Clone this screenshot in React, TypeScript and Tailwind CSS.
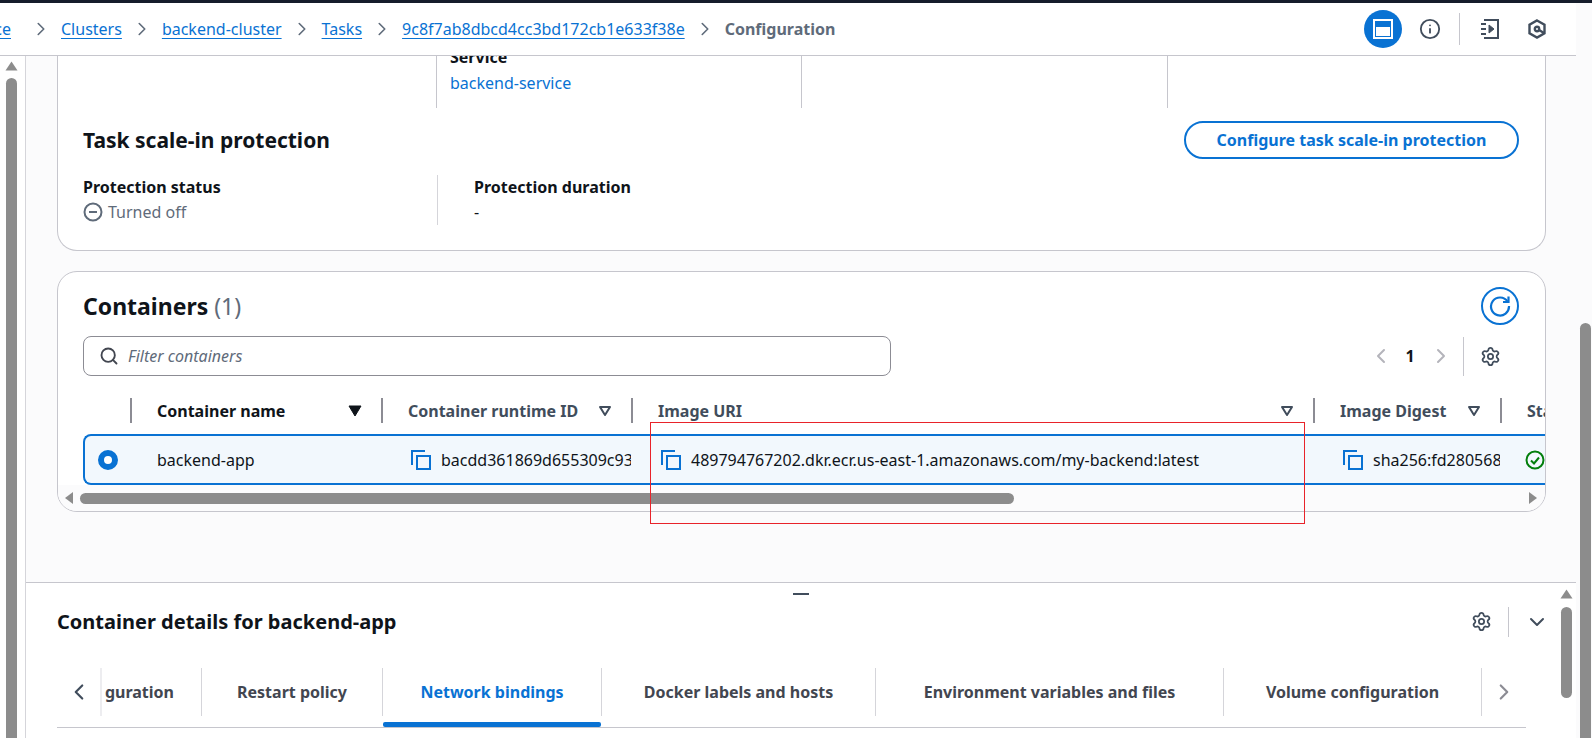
import React from 'react';
import { ChevronLeft, ChevronRight, ChevronDown, Info, Settings, Search } from 'lucide-react';

const font = "font-['Noto_Sans','Liberation_Sans',sans-serif]";

function CopyIcon() {
    return (
        <svg width="20" height="20" viewBox="0 0 20 20" fill="none" stroke="#0972d3" strokeWidth="2" className="flex-none">
            <path d="M1 15V1h13" />
            <rect x="6" y="6" width="13" height="13" />
        </svg>
    );
}

function SortIcon({ filled }: { filled?: boolean }) {
    return (
        <svg width="14" height="12" viewBox="0 0 14 12" className="flex-none">
            {filled ? (
                <path d="M1 1h12L7 11z" fill="#0f141a" stroke="#0f141a" strokeWidth="1" strokeLinejoin="round" />
            ) : (
                <path d="M2 2h10L7 10z" fill="none" stroke="#414d5c" strokeWidth="2" strokeLinejoin="round" />
            )}
        </svg>
    );
}

function UpArrow() {
    return (
        <svg width="13" height="10" viewBox="0 0 13 10" className="flex-none">
            <path d="M6.5 0.5 12.5 9.5H0.5z" fill="#8c8c8c" />
        </svg>
    );
}

function Crumb({ label }: { label: string }) {
    return <a className="text-[#0972d3] underline underline-offset-[3px] decoration-1 whitespace-nowrap">{label}</a>;
}

function CrumbSep() {
    return <ChevronRight size={22} strokeWidth={1.75} className="text-[#5f6b7a] flex-none" />;
}

function HeaderIcons() {
    return (
        <div className="flex items-center ml-auto text-[#414d5c]">
            <div className="w-[38px] h-[38px] rounded-full bg-[#0972d3] flex items-center justify-center">
                <svg width="20" height="20" viewBox="0 0 20 20" fill="none">
                    <rect x="1" y="1" width="18" height="18" stroke="#fff" strokeWidth="2" />
                    <rect x="3" y="8" width="14" height="9" fill="#fff" />
                </svg>
            </div>
            <Info size={22} strokeWidth={2} className="ml-[17px]" />
            <div className="w-px h-[32px] bg-[#c6c6cd] ml-[18px]" />
            <svg width="20" height="20" viewBox="0 0 20 20" fill="none" stroke="currentColor" strokeWidth="2" className="ml-[20px]">
                <path d="M4 1h14v18H4" />
                <path d="M1 5h5M1 10h5M1 15h5" />
                <path d="M9 6l5 4-5 4z" fill="currentColor" strokeWidth="1" />
            </svg>
            <svg width="20" height="20" viewBox="0 0 20 20" fill="none" stroke="currentColor" strokeWidth="2.4" className="ml-[27px] mr-[29px]">
                <path d="M10 1.5l7.5 4.2v8.6L10 18.5l-7.5-4.2V5.700z" />
                <circle cx="10" cy="10" r="2.200" />
                <path d="M12 11l5 3" />
            </svg>
        </div>
    );
}

function TableHead({ width, label, sort, active }: { width: string; label: string; sort?: boolean; active?: boolean }) {
    return (
        <div className={`${width} flex-none flex items-center h-[25px] border-l-2 border-[#8c8c94] pl-[25px] pr-[19px]`}>
            <span className={`font-bold whitespace-nowrap ${active ? 'text-[#0f141a]' : 'text-[#414d5c]'}`}>{label}</span>
            {sort && <span className="ml-auto"><SortIcon filled={active} /></span>}
        </div>
    );
}

function CopyCell({ width, value }: { width: string; value: string }) {
    return (
        <div className={`${width} flex-none flex items-center gap-[10px] pl-[30px] overflow-hidden whitespace-nowrap text-[#0f141a]`}>
            <CopyIcon />
            <span>{value}</span>
        </div>
    );
}

function Tab({ label, active, width }: { label: string; active?: boolean; width: string }) {
    return (
        <div className={`${width} flex-none h-full relative flex items-center justify-center border-r border-[#d5d5da] font-bold whitespace-nowrap ${active ? 'text-[#0972d3]' : 'text-[#424650]'}`}>
            {label}
            {active && <div className="absolute left-0 right-0 -bottom-[11px] h-[5px] bg-[#0972d3] rounded-[2px]" />}
        </div>
    );
}

export default function App() {
    return (
        <div className={`${font} w-[1592px] h-[738px] overflow-hidden flex flex-col bg-[#fbfbfc] text-[16px] text-[#0f141a] relative`}>
            <div className="h-[3px] flex-none bg-[#161d2b]" />
            <div className="flex flex-1 min-h-0">
                <div className="w-[1576px] flex-none flex flex-col">
                    <div className="h-[53px] flex-none bg-white border-b border-[#c6c6cd] flex items-center gap-[9px] text-[16px]">
                        <div className="w-[11px] overflow-hidden flex justify-end"><Crumb label="ce" /></div>
                        <span className="w-[1px]" />
                        <CrumbSep />
                        <Crumb label="Clusters" />
                        <CrumbSep />
                        <Crumb label="backend-cluster" />
                        <CrumbSep />
                        <Crumb label="Tasks" />
                        <CrumbSep />
                        <Crumb label="9c8f7ab8dbcd4cc3bd172cb1e633f38e" />
                        <CrumbSep />
                        <span className="font-bold text-[#5f6b7a] whitespace-nowrap">Configuration</span>
                        <HeaderIcons />
                    </div>

                    <div className="flex flex-1 min-h-0">
                        <div className="w-[26px] flex-none bg-white border-r border-[#d5d5da] flex flex-col items-center pr-[2px] pt-[5px]">
                            <UpArrow />
                            <div className="w-[11px] flex-1 mt-[7px] bg-[#8c8c8c] rounded-t-full" />
                        </div>

                        <div className="flex-1 min-w-0 flex flex-col">
                            <div className="h-[526px] flex-none bg-[#fbfbfc] pl-[31px] pr-[30px]">
                                <div className="h-[195px] bg-white border border-t-0 border-[#c6c6cd] rounded-b-[20px] overflow-hidden">
                                    <div className="flex h-[52px]">
                                        <div className="w-[378px] flex-none" />
                                        <div className="w-[365px] flex-none border-l border-[#c6c6cd] pl-[13px]">
                                            <div className="font-bold leading-[20px] -mt-[9px]">Service</div>
                                            <div className="text-[#0972d3] leading-[26px] mt-[3px]">backend-service</div>
                                        </div>
                                        <div className="w-[366px] flex-none border-l border-[#c6c6cd]" />
                                        <div className="flex-1 border-l border-[#c6c6cd]" />
                                    </div>
                                    <div className="flex items-center justify-between pl-[25px] pr-[26px] mt-[13px]">
                                        <h2 className="text-[21px] font-bold leading-[38px]">Task scale-in protection</h2>
                                        <button className="h-[38px] w-[335px] rounded-full border-2 border-[#0972d3] text-[#0972d3] font-bold">Configure task scale-in protection</button>
                                    </div>
                                    <div className="flex pl-[25px] mt-[16px]">
                                        <div className="w-[354px] flex-none h-[50px]">
                                            <div className="font-bold leading-[24px]">Protection status</div>
                                            <div className="flex items-center gap-[5px] text-[#5f6b7a] leading-[26px]">
                                                <svg width="20" height="20" viewBox="0 0 20 20" fill="none" stroke="#5f6b7a" strokeWidth="2">
                                                    <circle cx="10" cy="10" r="8.500" />
                                                    <path d="M6 10h8" />
                                                </svg>
                                                Turned off
                                            </div>
                                        </div>
                                        <div className="border-l border-[#d5d5da] pl-[36px] h-[50px]">
                                            <div className="font-bold leading-[24px]">Protection duration</div>
                                            <div className="leading-[26px]">-</div>
                                        </div>
                                    </div>
                                </div>

                                <div className="mt-[20px] h-[241px] bg-white border border-[#c6c6cd] rounded-[20px] overflow-hidden flex flex-col">
                                    <div className="flex items-center justify-between pl-[25px] pr-[26px] pt-[15px]">
                                        <h2 className="text-[23px] font-bold leading-[38px]">
                                            Containers <span className="font-normal text-[#5f6b7a]">(1)</span>
                                        </h2>
                                        <div className="w-[38px] h-[38px] rounded-full border-2 border-[#0972d3] flex items-center justify-center">
                                            <svg width="22" height="22" viewBox="0 0 22 22" fill="none" stroke="#0972d3" strokeWidth="2.200">
                                                <path d="M18.500 6.500A9 9 0 1 0 20 11" />
                                                <path d="M19.500 1.500v5.500h-5.500" />
                                            </svg>
                                        </div>
                                    </div>
                                    <div className="flex items-center pl-[25px] mt-[11px]">
                                        <div className="w-[808px] h-[40px] rounded-[8px] border border-[#8c8c94] flex items-center pl-[15px] gap-[9px] text-[#5f6b7a] italic">
                                            <Search size={20} strokeWidth={2.250} className="text-[#424650]" />
                                            Filter containers
                                        </div>
                                        <ChevronLeft size={24} strokeWidth={2} className="text-[#b4b4bb] ml-[478px]" />
                                        <span className="font-bold ml-[11px] w-[12px] text-center">1</span>
                                        <ChevronRight size={24} strokeWidth={2} className="text-[#b4b4bb] ml-[13px]" />
                                        <div className="w-px h-[39px] bg-[#c6c6cd] ml-[10px]" />
                                        <Settings size={21} strokeWidth={2} className="text-[#414d5c] ml-[16px]" />
                                    </div>
                                    <div className="mt-[22px] pl-[25px] overflow-hidden flex-none">
                                        <div className="w-[1600px]">
                                            <div className="flex h-[37px]">
                                                <div className="w-[47px] flex-none" />
                                                <TableHead width="w-[251px]" label="Container name" sort active />
                                                <TableHead width="w-[250px]" label="Container runtime ID" sort />
                                                <TableHead width="w-[682px]" label="Image URI" sort />
                                                <TableHead width="w-[187px]" label="Image Digest" sort />
                                                <TableHead width="w-[183px]" label="Status" />
                                            </div>
                                            <div className="flex items-center h-[51px] border-2 border-r-0 border-[#0972d3] rounded-l-[8px] bg-[#f2f8fd] -mt-[1px]">
                                                <div className="w-[45px] flex-none flex justify-center pl-[1px]">
                                                    <div className="w-[20px] h-[20px] rounded-full border-[6px] border-[#0972d3] bg-white" />
                                                </div>
                                                <div className="w-[251px] flex-none pl-[27px]">backend-app</div>
                                                <CopyCell width="w-[250px]" value="bacdd361869d655309c93a7e" />
                                                <CopyCell width="w-[682px]" value="489794767202.dkr.ecr.us-east-1.amazonaws.com/my-backend:latest" />
                                                <CopyCell width="w-[187px]" value="sha256:fd2805684cbe9a1" />
                                                <div className="pl-[25px]">
                                                    <svg width="20" height="20" viewBox="0 0 20 20" fill="none" stroke="#037f0c" strokeWidth="2">
                                                        <circle cx="10" cy="10" r="8.500" />
                                                        <path d="M6 10.500l3 3 5-6" />
                                                    </svg>
                                                </div>
                                            </div>
                                        </div>
                                    </div>
                                    <div className="flex-1 flex items-center pl-[7px] pr-[8px] bg-[#fbfbfc]">
                                        <svg width="8" height="12" viewBox="0 0 8 12"><path d="M8 0v12L0 6z" fill="#8c8c8c" /></svg>
                                        <div className="w-[934px] h-[11px] bg-[#8c8c8c] rounded-full ml-[7px]" />
                                        <svg width="8" height="12" viewBox="0 0 8 12" className="ml-auto"><path d="M0 0v12l8-6z" fill="#8c8c8c" /></svg>
                                    </div>
                                </div>
                            </div>

                            <div className="flex-1 min-h-0 flex bg-white border-t border-[#c6c6cd]">
                                <div className="w-[1534px] flex-none flex flex-col pl-[31px] relative">
                                    <div className="absolute left-[767px] top-[10px] w-[16px] h-[2px] bg-[#414d5c]" />
                                    <div className="flex items-center pt-[20px] pr-[7px] h-[57px]">
                                        <h2 className="text-[20px] font-bold">Container details for backend-app</h2>
                                        <Settings size={21} strokeWidth={2} className="text-[#414d5c] ml-auto" />
                                        <div className="w-px h-[30px] bg-[#c6c6cd] ml-[16px]" />
                                        <ChevronDown size={24} strokeWidth={2} className="text-[#414d5c] ml-[16px] mr-[4px]" />
                                    </div>
                                    <div className="mt-[28px] h-[60px] w-[1469px] flex-none border-b border-[#c6c6cd] pb-[11px]">
                                        <div className="flex items-center h-[48px] w-full">
                                            <div className="w-[45px] flex-none flex items-center pl-[9px] h-full border-r-2 border-[#ededf0] text-[#414d5c]">
                                                <ChevronLeft size={26} strokeWidth={2} />
                                            </div>
                                            <div className="w-[100px] flex-none h-full border-r border-[#d5d5da] flex items-center justify-end pr-[27px] font-bold text-[#424650] overflow-hidden whitespace-nowrap">guration</div>
                                            <Tab width="w-[181px]" label="Restart policy" />
                                            <Tab width="w-[219px]" label="Network bindings" active />
                                            <Tab width="w-[274px]" label="Docker labels and hosts" />
                                            <Tab width="w-[348px]" label="Environment variables and files" />
                                            <Tab width="w-[258px]" label="Volume configuration" />
                                            <div className="flex-1 flex items-center justify-center text-[#8c8c94]">
                                                <ChevronRight size={26} strokeWidth={2} />
                                            </div>
                                        </div>
                                    </div>
                                </div>
                                <div className="flex-1 flex flex-col items-center pt-[6px] pr-[3px]">
                                    <UpArrow />
                                    <div className="w-[11px] h-[91px] mt-[8px] bg-[#8c8c8c] rounded-full" />
                                </div>
                            </div>
                        </div>
                    </div>
                </div>

                <div className="flex-1 pt-[320px] pl-[4px]">
                    <div className="w-[11px] h-full bg-[#8c8c8c] rounded-t-full" />
                </div>
            </div>

            {/* red annotation box from the original screenshot */}
            <div className="absolute left-[650px] top-[422px] w-[655px] h-[102px] border border-[#e8232a] pointer-events-none" />
        </div>
    );
}
